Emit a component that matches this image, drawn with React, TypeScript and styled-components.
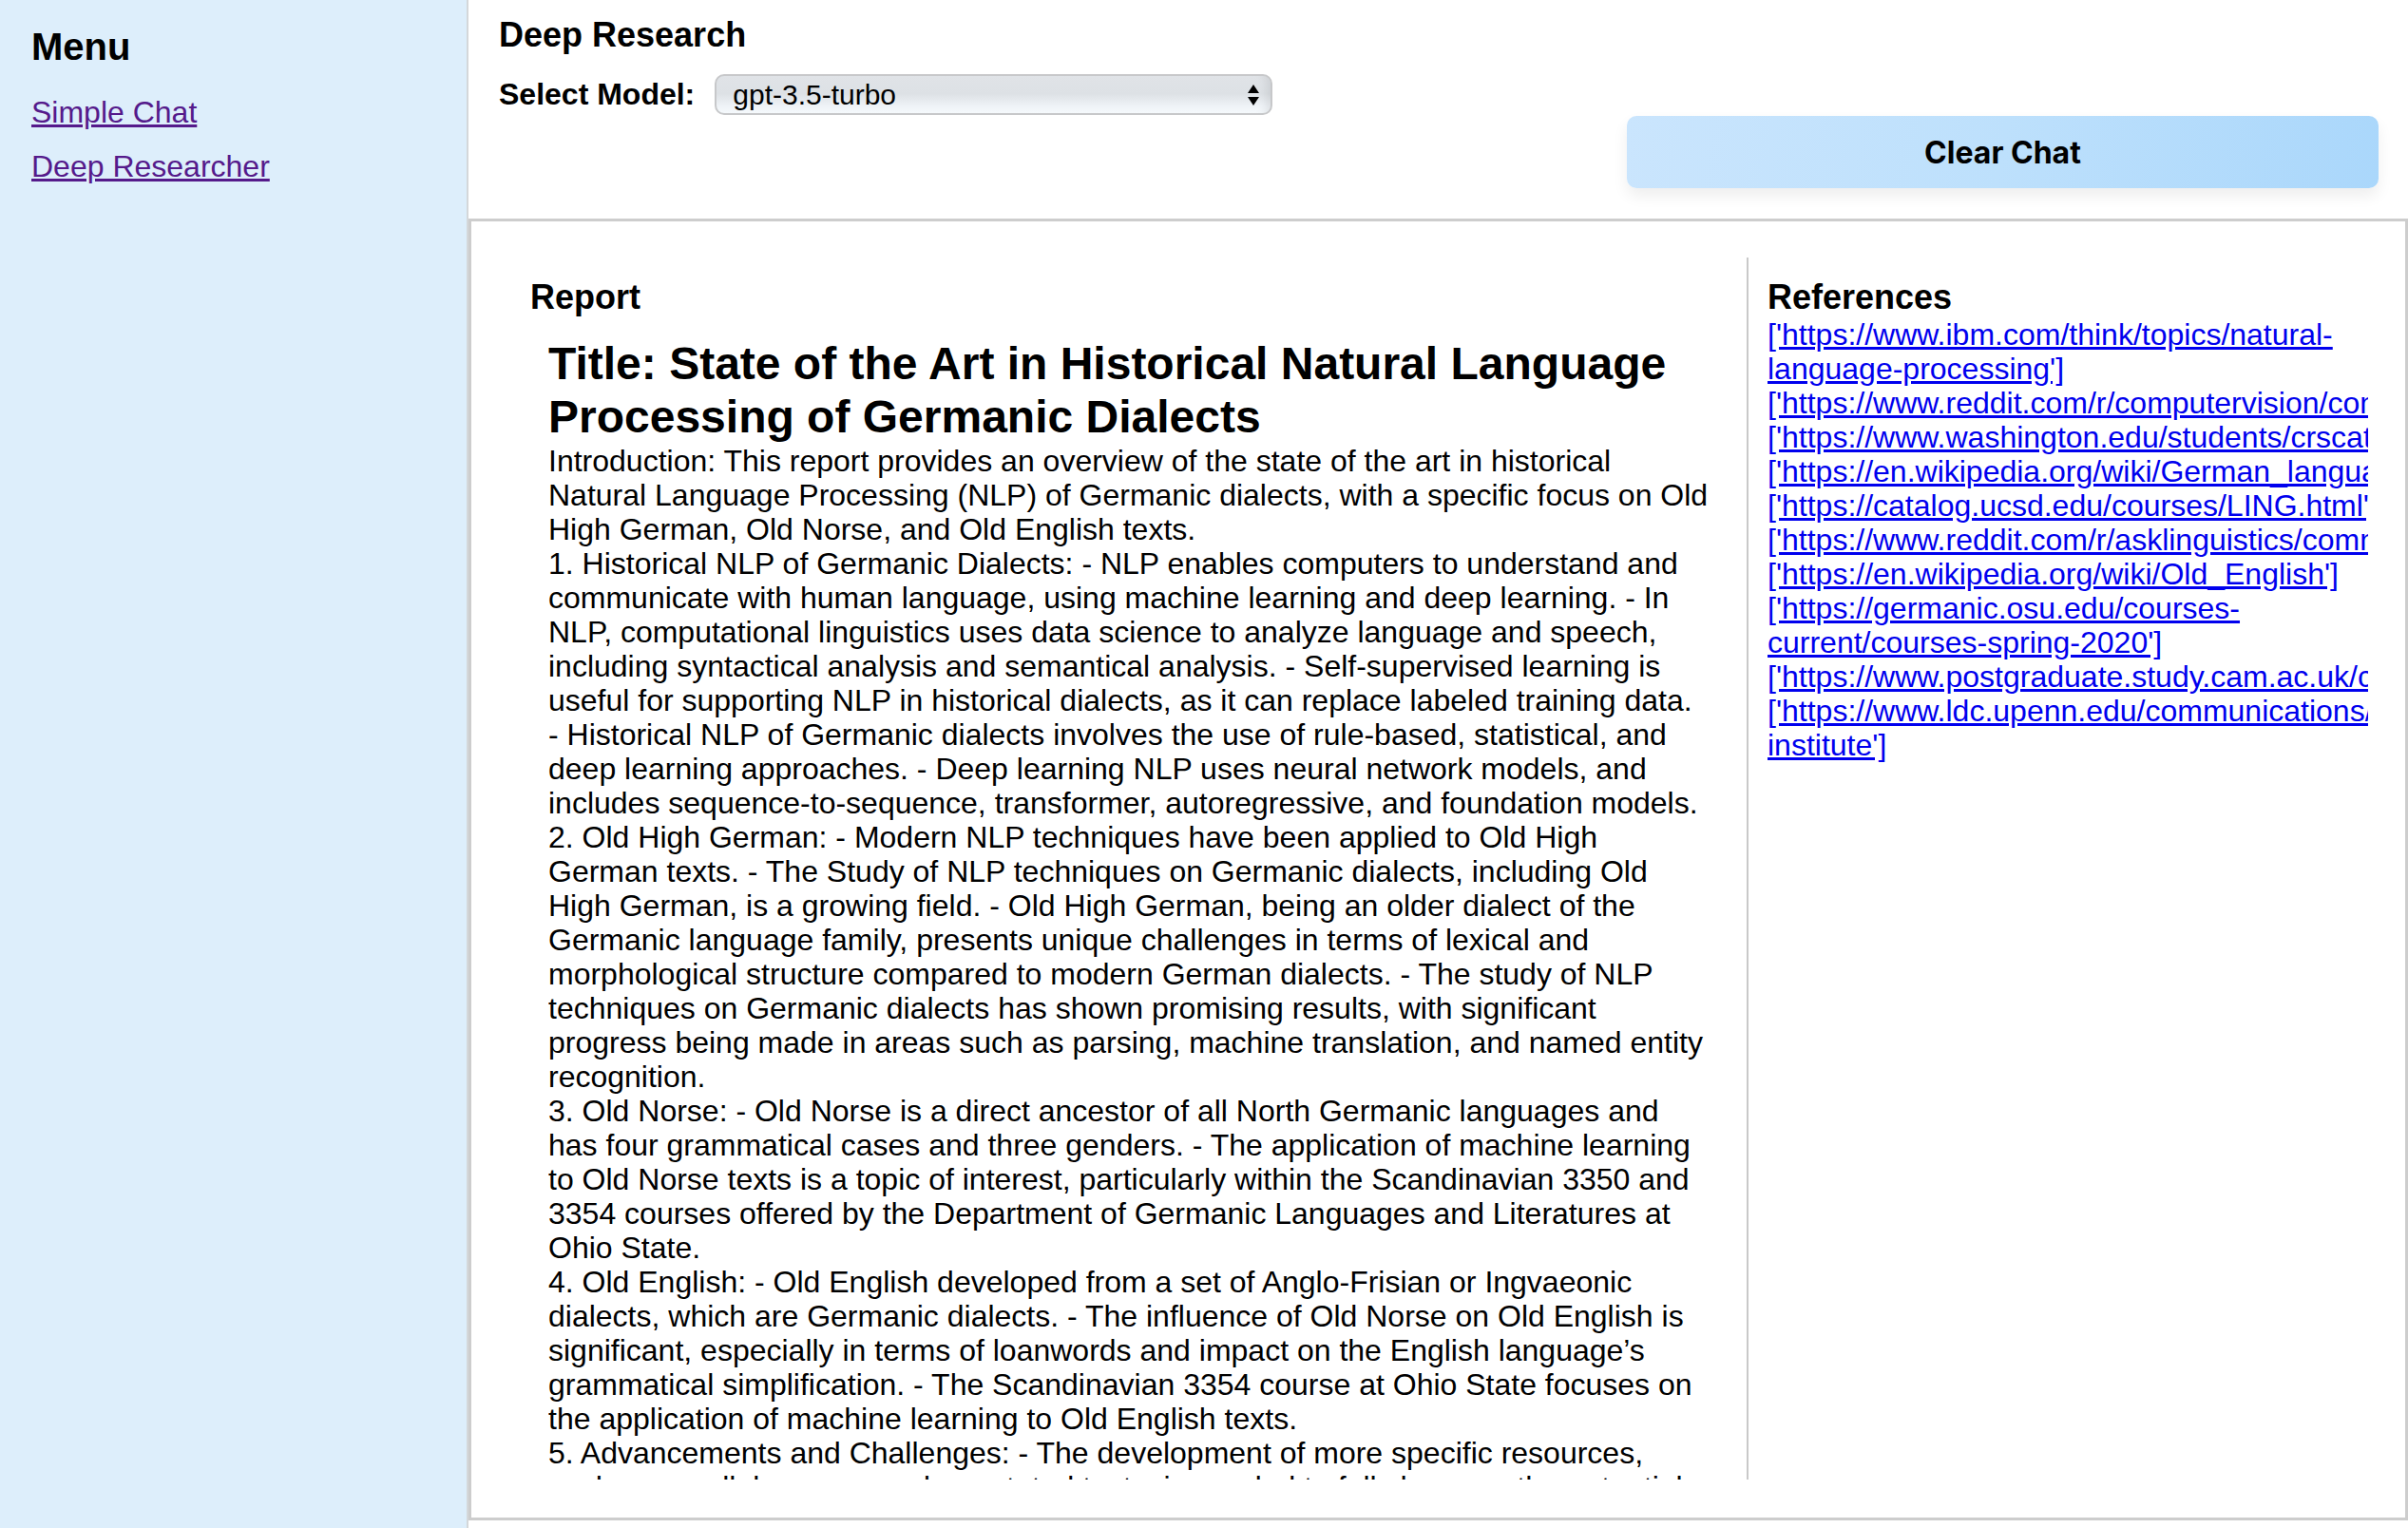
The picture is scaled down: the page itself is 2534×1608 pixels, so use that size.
import React from "react";
import styled, { createGlobalStyle } from "styled-components";

const GlobalStyle = createGlobalStyle`
  html, body {
    margin: 0;
    padding: 0;
    height: 100%;
    background: #ffffff;
  }
  body {
    font-family: "Liberation Sans", Arial, Helvetica, sans-serif;
    color: #000;
  }
  #root {
    height: 100%;
  }
  * {
    box-sizing: border-box;
  }
`;

const Page = styled.div`
  display: flex;
  height: 100vh;
  overflow: hidden;
`;

const Sidebar = styled.aside`
  flex: 0 0 493px;
  background: #ddeefb;
  border-right: 2px solid #d4d7da;
  padding: 26px 31px 26px 33px;
`;

const MenuTitle = styled.h2`
  margin: 0 0 28px;
  font-size: 40px;
  line-height: 46px;
  font-weight: 700;
`;

const Nav = styled.nav`
  display: flex;
  flex-direction: column;
  gap: 21px;
`;

const NavLink = styled.a`
  font-size: 32px;
  line-height: 36px;
  color: #551a8b;
  text-decoration: underline;
  align-self: flex-start;
`;

const Main = styled.main`
  flex: 1;
  min-width: 0;
  display: flex;
  flex-direction: column;
`;

const Header = styled.header`
  padding: 16px 31px 0 32px;
  margin-bottom: 32px;
`;

const PageTitle = styled.h1`
  margin: 0;
  font-size: 36px;
  line-height: 41px;
  font-weight: 700;
`;

const ModelRow = styled.div`
  display: flex;
  align-items: center;
  gap: 21px;
  margin-top: 21px;
`;

const Label = styled.label`
  font-size: 32px;
  line-height: 37px;
  font-weight: 700;
`;

const SelectWrap = styled.div`
  position: relative;
  width: 587px;
  height: 43px;
`;

const Select = styled.select`
  appearance: none;
  -webkit-appearance: none;
  width: 100%;
  height: 100%;
  border: 2px solid #c7c8ca;
  border-radius: 10px;
  background: linear-gradient(
    to bottom,
    #e0e3e7 0%,
    #dde1e5 48%,
    #eef2f6 80%,
    #f5f9fc 100%
  );
  box-shadow: inset -14px 0 10px -10px rgba(0, 0, 0, 0.08);
  padding: 0 40px 0 17px;
  font-family: "Liberation Sans", Arial, Helvetica, sans-serif;
  font-size: 30px;
  color: #000;
  outline: none;
`;

const SelectArrows = styled.svg`
  position: absolute;
  right: 13px;
  top: 50%;
  transform: translateY(-50%);
  pointer-events: none;
`;

const ActionRow = styled.div`
  display: flex;
  justify-content: flex-end;
  margin-top: 1px;
`;

const ClearButton = styled.button`
  width: 791px;
  height: 76px;
  border: none;
  border-radius: 10px;
  background: linear-gradient(100deg, #cae5fd 0%, #bde0fc 50%, #aad7fb 100%);
  box-shadow: 0 8px 16px rgba(0, 0, 0, 0.07);
  font-family: Inter, "Liberation Sans", Arial, sans-serif;
  font-size: 32px;
  font-weight: 700;
  color: #000;
  cursor: pointer;
`;

const Panel = styled.section`
  flex: 1;
  min-height: 0;
  margin-bottom: 8px;
  border: 3px solid #cdcdcd;
  padding: 38px 39px 40px 41px;
`;

const Columns = styled.div`
  display: grid;
  grid-template-columns: 1261px minmax(0, 1fr);
  column-gap: 40px;
  height: 100%;
`;

const ReportCol = styled.div`
  display: flex;
  flex-direction: column;
  min-height: 0;
  padding: 21px 0 0 21px;
`;

const SectionTitle = styled.h3`
  margin: 0;
  font-size: 36px;
  line-height: 41px;
  font-weight: 700;
`;

const ReportBody = styled.div`
  flex: 1;
  min-height: 0;
  overflow: hidden;
  margin-top: 22px;
  padding-left: 19px;
`;

const ReportTitle = styled.h2`
  margin: 0;
  font-size: 48px;
  line-height: 56px;
  font-weight: 700;
`;

const ReportText = styled.div`
  font-size: 32px;
  line-height: 36px;
  white-space: pre-line;
`;

const RefCol = styled.div`
  min-height: 0;
  overflow: hidden;
  border-left: 2px solid #c9c9c9;
  padding: 21px 0 0 20px;
`;

const RefList = styled.div`
  display: flex;
  flex-direction: column;
  margin-top: 1px;
`;

const RefLink = styled.a`
  font-size: 32px;
  line-height: 36px;
  color: #0000ee;
  text-decoration: underline;
`;

const reportText = `Introduction: This report provides an overview of the state of the art in historical Natural Language Processing (NLP) of Germanic dialects, with a specific focus on Old High German, Old Norse, and Old English texts.
1. Historical NLP of Germanic Dialects: - NLP enables computers to understand and communicate with human language, using machine learning and deep learning. - In NLP, computational linguistics uses data science to analyze language and speech, including syntactical analysis and semantical analysis. - Self-supervised learning is useful for supporting NLP in historical dialects, as it can replace labeled training data. - Historical NLP of Germanic dialects involves the use of rule-based, statistical, and deep learning approaches. - Deep learning NLP uses neural network models, and includes sequence-to-sequence, transformer, autoregressive, and foundation models.
2. Old High German: - Modern NLP techniques have been applied to Old High German texts. - The Study of NLP techniques on Germanic dialects, including Old High German, is a growing field. - Old High German, being an older dialect of the Germanic language family, presents unique challenges in terms of lexical and morphological structure compared to modern German dialects. - The study of NLP techniques on Germanic dialects has shown promising results, with significant progress being made in areas such as parsing, machine translation, and named entity recognition.
3. Old Norse: - Old Norse is a direct ancestor of all North Germanic languages and has four grammatical cases and three genders. - The application of machine learning to Old Norse texts is a topic of interest, particularly within the Scandinavian 3350 and 3354 courses offered by the Department of Germanic Languages and Literatures at Ohio State.
4. Old English: - Old English developed from a set of Anglo-Frisian or Ingvaeonic dialects, which are Germanic dialects. - The influence of Old Norse on Old English is significant, especially in terms of loanwords and impact on the English language’s grammatical simplification. - The Scandinavian 3354 course at Ohio State focuses on the application of machine learning to Old English texts.
5. Advancements and Challenges: - The development of more specific resources, such as parallel corpora and annotated texts, is needed to fully harness the potential of NLP for historical Germanic dialects. - Spelling variation and the scarcity of digitized sources remain significant challenges.
Conclusion: Historical NLP of Germanic dialects is an active and growing field of research.`;

const references = [
  "['https://www.ibm.com/think/topics/natural-language-processing']",
  "['https://www.reddit.com/r/computervision/comments/1b7xq2k/state_of_the_art_in_historical_nlp/']",
  "['https://www.washington.edu/students/crscat/ling.html']",
  "['https://en.wikipedia.org/wiki/German_language']",
  "['https://catalog.ucsd.edu/courses/LING.html']",
  "['https://www.reddit.com/r/asklinguistics/comments/p2k9x1/old_high_german_resources/']",
  "['https://en.wikipedia.org/wiki/Old_English']",
  "['https://germanic.osu.edu/courses-current/courses-spring-2020']",
  "['https://www.postgraduate.study.cam.ac.uk/courses/directory/mmlampasm']",
  "['https://www.ldc.upenn.edu/communications/news/ldc_summer_data-institute']",
];

export default function App() {
  return (
    <>
      <GlobalStyle />
      <Page>
        <Sidebar>
          <MenuTitle>Menu</MenuTitle>
          <Nav>
            <NavLink href="#simple-chat">Simple Chat</NavLink>
            <NavLink href="#deep-researcher">Deep Researcher</NavLink>
          </Nav>
        </Sidebar>
        <Main>
          <Header>
            <PageTitle>Deep Research</PageTitle>
            <ModelRow>
              <Label htmlFor="model">Select Model:</Label>
              <SelectWrap>
                <Select id="model" defaultValue="gpt-3.5-turbo">
                  <option value="gpt-3.5-turbo">gpt-3.5-turbo</option>
                  <option value="gpt-4">gpt-4</option>
                  <option value="gpt-4o">gpt-4o</option>
                </Select>
                <SelectArrows width="14" height="24" viewBox="0 0 14 24">
                  <path d="M7 1 L13 10 L1 10 Z" fill="#000" />
                  <path d="M7 23 L13 14 L1 14 Z" fill="#000" />
                </SelectArrows>
              </SelectWrap>
            </ModelRow>
            <ActionRow>
              <ClearButton type="button">Clear Chat</ClearButton>
            </ActionRow>
          </Header>
          <Panel>
            <Columns>
              <ReportCol>
                <SectionTitle>Report</SectionTitle>
                <ReportBody>
                  <ReportTitle>
                    Title: State of the Art in Historical Natural Language
                    Processing of Germanic Dialects
                  </ReportTitle>
                  <ReportText>{reportText}</ReportText>
                </ReportBody>
              </ReportCol>
              <RefCol>
                <SectionTitle>References</SectionTitle>
                <RefList>
                  {references.map((r) => (
                    <div key={r}>
                      <RefLink href="#ref">{r}</RefLink>
                    </div>
                  ))}
                </RefList>
              </RefCol>
            </Columns>
          </Panel>
        </Main>
      </Page>
    </>
  );
}
